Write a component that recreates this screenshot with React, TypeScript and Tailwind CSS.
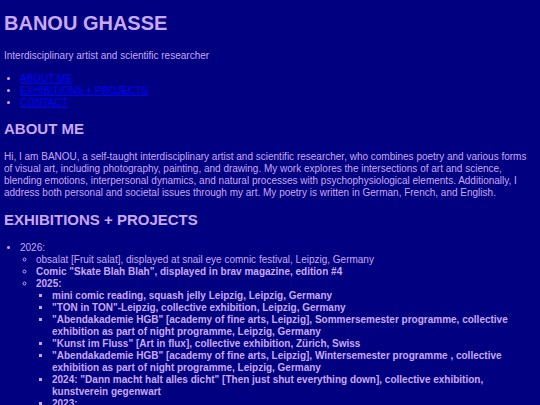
export default function App() {
  const font = { fontFamily: '"Liberation Sans", Arial, sans-serif' };
  return (
    <div
      className="min-h-screen bg-[#000080] text-[#c9a8f2] px-[4px] pb-4 text-[10px] leading-[12px] overflow-hidden"
      style={font}
    >
      <h1 className="pt-[12px] text-[20px] leading-[23px] font-bold">BANOU GHASSE</h1>
      <p className="mt-[15px]">Interdisciplinary artist and scientific researcher</p>
      <ul className="mt-[11px] list-disc pl-[16px]">
        <li>
          <a href="#about" className="text-[#0000ff] underline">ABOUT ME</a>
        </li>
        <li>
          <a href="#exhibitions" className="text-[#0000ff] underline">EXHIBITIONS + PROJECTS</a>
        </li>
        <li>
          <a href="#contact" className="text-[#0000ff] underline">CONTACT</a>
        </li>
      </ul>
      <h2 className="mt-[11px] text-[15px] leading-[17px] font-bold">ABOUT ME</h2>
      <p className="mt-[14px]">
        Hi, I am BANOU, a self-taught interdisciplinary artist and scientific researcher, who combines poetry and various forms of visual art, including photography, painting, and drawing. My work explores the intersections of art and science, blending emotions, interpersonal dynamics, and natural processes with psychophysiological elements. Additionally, I address both personal and societal issues through my art. My poetry is written in German, French, and English.
      </p>
      <h2 className="mt-[12px] text-[15px] leading-[17px] font-bold">EXHIBITIONS + PROJECTS</h2>
      <ul className="mt-[14px] list-disc pl-[16px]">
        <li>
          2026:
          <ul className="list-[circle] pl-[16px]">
            <li>obsalat [Fruit salat], displayed at snail eye comnic festival, Leipzig, Germany</li>
            <li className="font-bold">Comic "Skate Blah Blah", displayed in brav magazine, edition #4</li>
            <li className="font-bold">
              2025:
              <ul className="list-[square] pl-[16px]">
                <li>mini comic reading, squash jelly Leipzig, Leipzig, Germany</li>
                <li>"TON in TON"-Leipzig, collective exhibition, Leipzig, Germany</li>
                <li>"Abendakademie HGB" [academy of fine arts, Leipzig], Sommersemester programme, collective exhibition as part of night programme, Leipzig, Germany</li>
                <li>"Kunst im Fluss" [Art in flux], collective exhibition, Zürich, Swiss</li>
                <li>"Abendakademie HGB" [academy of fine arts, Leipzig], Wintersemester programme , collective exhibition as part of night programme, Leipzig, Germany</li>
                <li>2024: "Dann macht halt alles dicht" [Then just shut everything down], collective exhibition, kunstverein gegenwart</li>
                <li>2023:</li>
              </ul>
            </li>
          </ul>
        </li>
      </ul>
    </div>
  );
}
